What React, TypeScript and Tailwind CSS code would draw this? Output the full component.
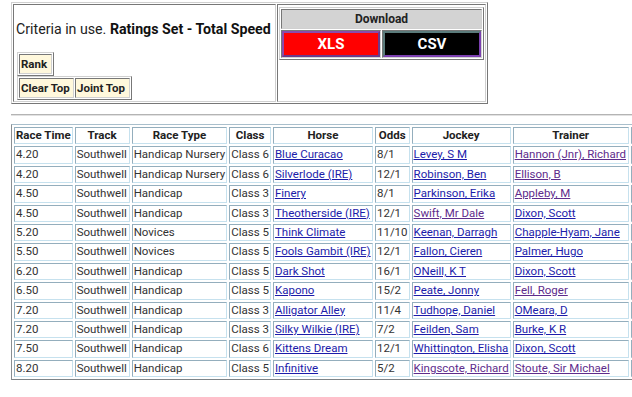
import React from "react";

const inset = "border border-t-[#777777] border-l-[#777777] border-b-[#d0d0d0] border-r-[#d0d0d0]";
const outset = "border border-t-[#d0d0d0] border-l-[#d0d0d0] border-b-[#777777] border-r-[#777777]";
const cell = "border border-t-[#94aebd] border-l-[#94aebd] border-b-[#c6e1ee] border-r-[#c6e1ee] px-[1px] py-[1px] whitespace-nowrap leading-[13.4px]";

type L = { t: string; v?: boolean };
type Row = [string, string, string, string, L, string, L, L];

const rows: Row[] = [
  ["4.20", "Southwell", "Handicap Nursery", "Class 6", { t: "Blue Curacao" }, "8/1", { t: "Levey, S M" }, { t: "Hannon (Jnr), Richard", v: true }],
  ["4.20", "Southwell", "Handicap Nursery", "Class 6", { t: "Silverlode (IRE)" }, "12/1", { t: "Robinson, Ben" }, { t: "Ellison, B", v: true }],
  ["4.50", "Southwell", "Handicap", "Class 3", { t: "Finery" }, "8/1", { t: "Parkinson, Erika" }, { t: "Appleby, M", v: true }],
  ["4.50", "Southwell", "Handicap", "Class 3", { t: "Theotherside (IRE)" }, "12/1", { t: "Swift, Mr Dale", v: true }, { t: "Dixon, Scott" }],
  ["5.20", "Southwell", "Novices", "Class 5", { t: "Think Climate" }, "11/10", { t: "Keenan, Darragh" }, { t: "Chapple-Hyam, Jane" }],
  ["5.50", "Southwell", "Novices", "Class 5", { t: "Fools Gambit (IRE)" }, "12/1", { t: "Fallon, Cieren" }, { t: "Palmer, Hugo" }],
  ["6.20", "Southwell", "Handicap", "Class 5", { t: "Dark Shot" }, "16/1", { t: "ONeill, K T" }, { t: "Dixon, Scott" }],
  ["6.50", "Southwell", "Handicap", "Class 5", { t: "Kapono" }, "15/2", { t: "Peate, Jonny" }, { t: "Fell, Roger", v: true }],
  ["7.20", "Southwell", "Handicap", "Class 3", { t: "Alligator Alley" }, "11/4", { t: "Tudhope, Daniel" }, { t: "OMeara, D" }],
  ["7.20", "Southwell", "Handicap", "Class 3", { t: "Silky Wilkie (IRE)" }, "7/2", { t: "Feilden, Sam" }, { t: "Burke, K R" }],
  ["7.50", "Southwell", "Handicap", "Class 6", { t: "Kittens Dream" }, "12/1", { t: "Whittington, Elisha" }, { t: "Dixon, Scott" }],
  ["8.20", "Southwell", "Handicap", "Class 5", { t: "Infinitive" }, "5/2", { t: "Kingscote, Richard", v: true }, { t: "Stoute, Sir Michael", v: true }],
];

function Lnk({ l }: { l: L }) {
  return (
    <a href="#" className={l.v ? "underline text-[#5e2c8c]" : "underline text-[#1c1caa]"}>
      {l.t}
    </a>
  );
}

export default function App() {
  return (
    <div className="w-[632px] h-[397px] overflow-hidden bg-white font-['Roboto',sans-serif] text-[#333333]">
      <div className="w-[900px] pl-[11px] pt-[2px]">
        {/* Top box */}
        <table className={`${outset} border-separate border-spacing-[1px]`}>
          <tbody>
            <tr>
              <td className={`${inset} w-[263px] h-[98px] px-[2px] pt-[2px] pb-0 align-top`}>
                <div className="h-[45px] flex items-center text-[14.2px] text-[#222222]">
                  <span>
                    Criteria in use. <b className="font-bold text-[#111111]">Ratings Set - Total Speed</b>
                  </span>
                </div>
                <table className={`${outset} border-separate border-spacing-[1px] ml-[1px]`}>
                  <tbody>
                    <tr>
                      <td className={`${inset} bg-[#fff8dc] w-[33px] h-[20px] px-[1px] text-[11.5px] font-bold text-[#222222] leading-[13px]`}>
                        Rank
                      </td>
                    </tr>
                  </tbody>
                </table>
                <table className={`${outset} border-separate border-spacing-[1px] ml-[1px]`}>
                  <tbody>
                    <tr>
                      <td className={`${inset} bg-[#fff8dc] w-[55px] h-[20px] px-[1px] text-[11.5px] font-bold text-[#222222] leading-[13px] whitespace-nowrap`}>
                        Clear Top
                      </td>
                      <td className={`${inset} bg-[#fff8dc] w-[55px] h-[20px] px-[1px] text-[11.5px] font-bold text-[#222222] leading-[13px] whitespace-nowrap`}>
                        Joint Top
                      </td>
                    </tr>
                  </tbody>
                </table>
              </td>
              <td className={`${inset} w-[209px] h-[98px] pl-[1px] pt-[2px] align-top`}>
                <table className={`${outset} border-separate border-spacing-[1px] w-[205px]`}>
                  <tbody>
                    <tr>
                      <td
                        colSpan={2}
                        className={`${inset} bg-[#d3d3d3] h-[20px] text-center text-[12px] font-bold text-[#222222] leading-[14px]`}
                      >
                        Download
                      </td>
                    </tr>
                    <tr>
                      <td className={`${inset} w-[100px] h-[28px] p-0`}>
                        <div className="h-[26px] bg-[#ff0000] border-2 border-t-[#8a4cab] border-l-[#8a4cab] border-b-[#6a3a8a] border-r-[#6a3a8a] flex items-center justify-center text-white font-bold text-[15px]">
                          XLS
                        </div>
                      </td>
                      <td className={`${inset} w-[100px] h-[28px] p-0`}>
                        <div className="h-[26px] bg-black border-2 border-t-[#5b7b7b] border-l-[#5b7b7b] border-b-[#7b3fb0] border-r-[#7b3fb0] flex items-center justify-center text-white font-bold text-[15px]">
                          CSV
                        </div>
                      </td>
                    </tr>
                  </tbody>
                </table>
              </td>
            </tr>
          </tbody>
        </table>

        {/* hr */}
        <div className="mt-[10px] h-[2px] border-t border-t-[#b4b4b4] border-b border-b-[#e2e2e2]" />

        {/* Main table */}
        <table className="mt-[8px] border border-t-[#a9bfcc] border-l-[#8a8f93] border-b-[#7d8387] border-r-[#7d8387] border-separate border-spacing-[2px] text-[11.5px]">
          <thead>
            <tr className="font-bold text-[#222222]">
              <th className={`${cell} w-[58px] text-center`}>Race Time</th>
              <th className={`${cell} w-[55px] text-center`}>Track</th>
              <th className={`${cell} w-[95px] text-center`}>Race Type</th>
              <th className={`${cell} w-[41px] text-center`}>Class</th>
              <th className={`${cell} w-[100px] text-center`}>Horse</th>
              <th className={`${cell} w-[32px] text-center`}>Odds</th>
              <th className={`${cell} w-[98px] text-center`}>Jockey</th>
              <th className={`${cell} w-[116px] text-center`}>Trainer</th>
              <th className={`${cell} w-[80px] text-center`}>&nbsp;</th>
            </tr>
          </thead>
          <tbody>
            {rows.map((r, i) => (
              <tr key={i}>
                <td className={`${cell} text-left`}>{r[0]}</td>
                <td className={`${cell} text-left`}>{r[1]}</td>
                <td className={`${cell} text-left`}>{r[2]}</td>
                <td className={`${cell} text-left`}>{r[3]}</td>
                <td className={`${cell} text-left`}>
                  <Lnk l={r[4]} />
                </td>
                <td className={`${cell} text-left`}>{r[5]}</td>
                <td className={`${cell} text-left`}>
                  <Lnk l={r[6]} />
                </td>
                <td className={`${cell} text-left`}>
                  <Lnk l={r[7]} />
                </td>
                <td className={`${cell} text-left`}>&nbsp;</td>
              </tr>
            ))}
          </tbody>
        </table>
      </div>
    </div>
  );
}
